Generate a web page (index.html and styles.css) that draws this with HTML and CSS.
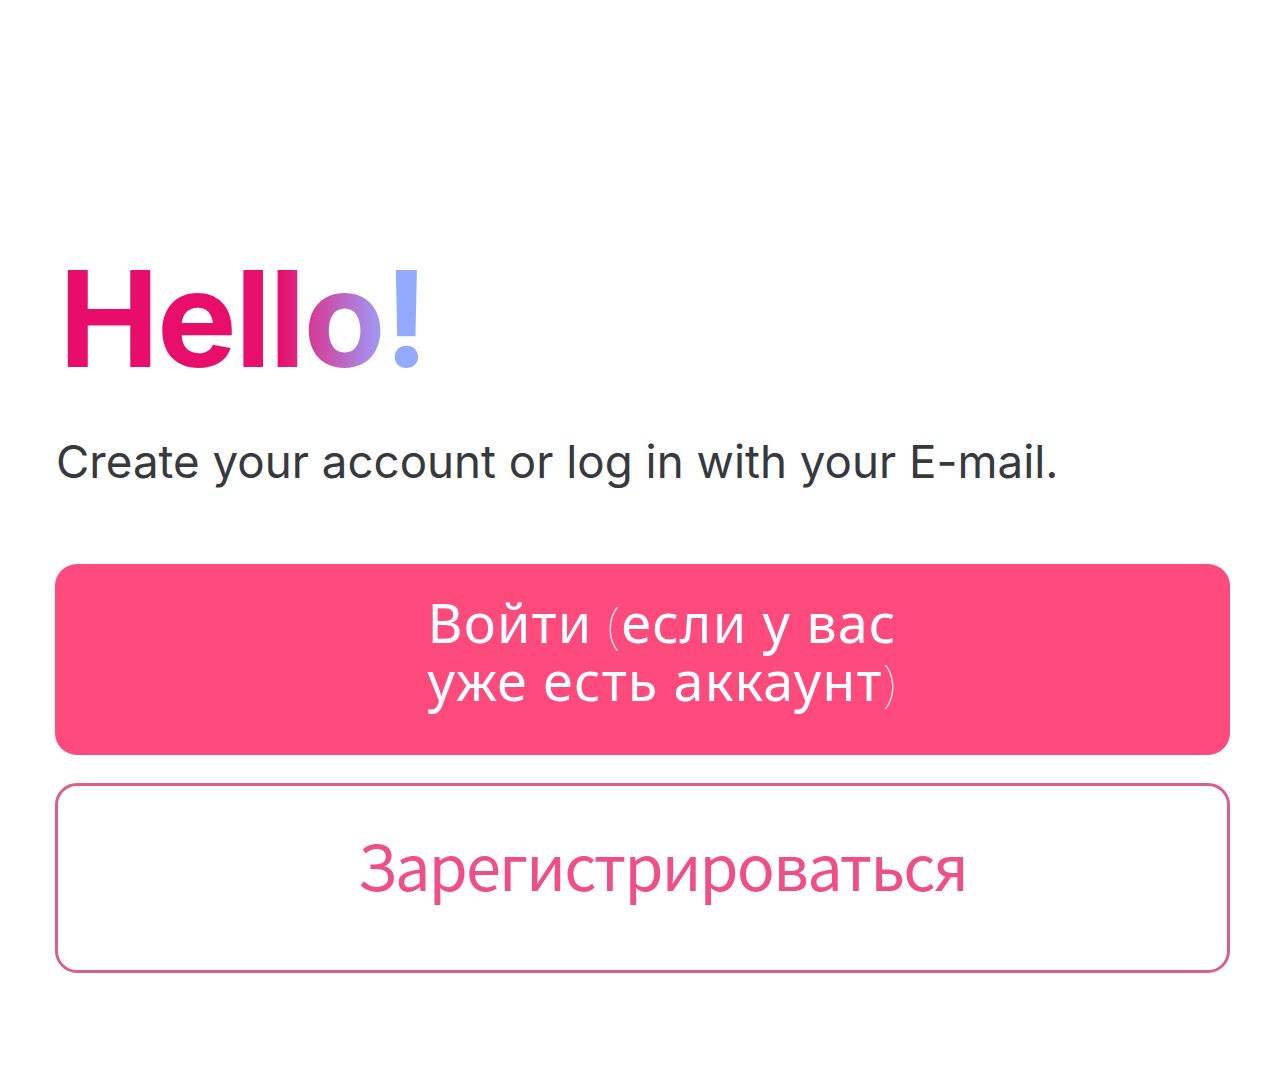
FILE: index.html
```html
<!DOCTYPE html>
<html lang="ru">
<head>
<meta charset="utf-8">
<title>Hello</title>
<link rel="stylesheet" href="styles.css">
</head>
<body>
<main class="screen">
  <h1 class="title">Hello!</h1>
  <p class="subtitle">Create your account or log in with your E-mail.</p>
  <div class="actions">
    <button class="btn btn-primary"><span class="btn-label">Войти <span class="paren">(</span>если у вас<br>уже есть аккаунт<span class="paren">)</span></span></button>
    <button class="btn btn-outline"><span class="btn-label-lg">Зарегистрироваться</span></button>
  </div>
</main>
</body>
</html>
```
FILE: styles.css
```css
html, body {
  margin: 0;
  padding: 0;
  background: #ffffff;
}

.screen {
  padding: 252px 55px 0 55px;
  display: flex;
  flex-direction: column;
}

.title {
  margin: 0 0 0 4px;
  font-family: "Inter", "Liberation Sans", sans-serif;
  font-weight: 700;
  font-size: 134px;
  line-height: 133px;
  letter-spacing: -2px;
  align-self: flex-start;
  background: linear-gradient(90deg, #e80d6b 0%, #e80e6c 60%, #d0439e 70%, #a889e6 84%, #93aaff 91%, #93aaff 100%);
  -webkit-background-clip: text;
  background-clip: text;
  color: transparent;
}

.subtitle {
  margin: 50px 0 0 1px;
  font-family: "Inter", "Liberation Sans", sans-serif;
  font-weight: 400;
  font-size: 45.7px;
  line-height: 54px;
  color: #36393e;
}

.actions {
  margin-top: 75px;
  display: flex;
  flex-direction: column;
  gap: 28px;
}

.btn {
  width: 100%;
  border-radius: 22px;
  display: flex;
  align-items: center;
  justify-content: center;
  font-family: "Noto Sans CJK SC", "Noto Sans", sans-serif;
  cursor: pointer;
  padding: 0;
}

.btn-primary {
  height: 191px;
  background: #fe4a7d;
  border: none;
  color: #ffffff;
}

.btn-label {
  display: block;
  width: 480px;
  margin-left: 50px;
  padding-bottom: 16px;
  text-align: left;
  font-family: "Noto Sans", "Open Sans", sans-serif;
  font-size: 54px;
  line-height: 56px;
  letter-spacing: 1.1px;
  white-space: nowrap;
}

.paren {
  font-weight: 100;
  font-size: 0.92em;
  opacity: 0.85;
}

.btn-outline {
  height: 190px;
  background: #ffffff;
  border: 3px solid #dc5f8b;
  color: #f04e86;
}

.btn-label-lg {
  font-size: 63px;
  line-height: 80px;
  letter-spacing: -1.8px;
  margin-left: 40px;
  padding-bottom: 28px;
}
```
